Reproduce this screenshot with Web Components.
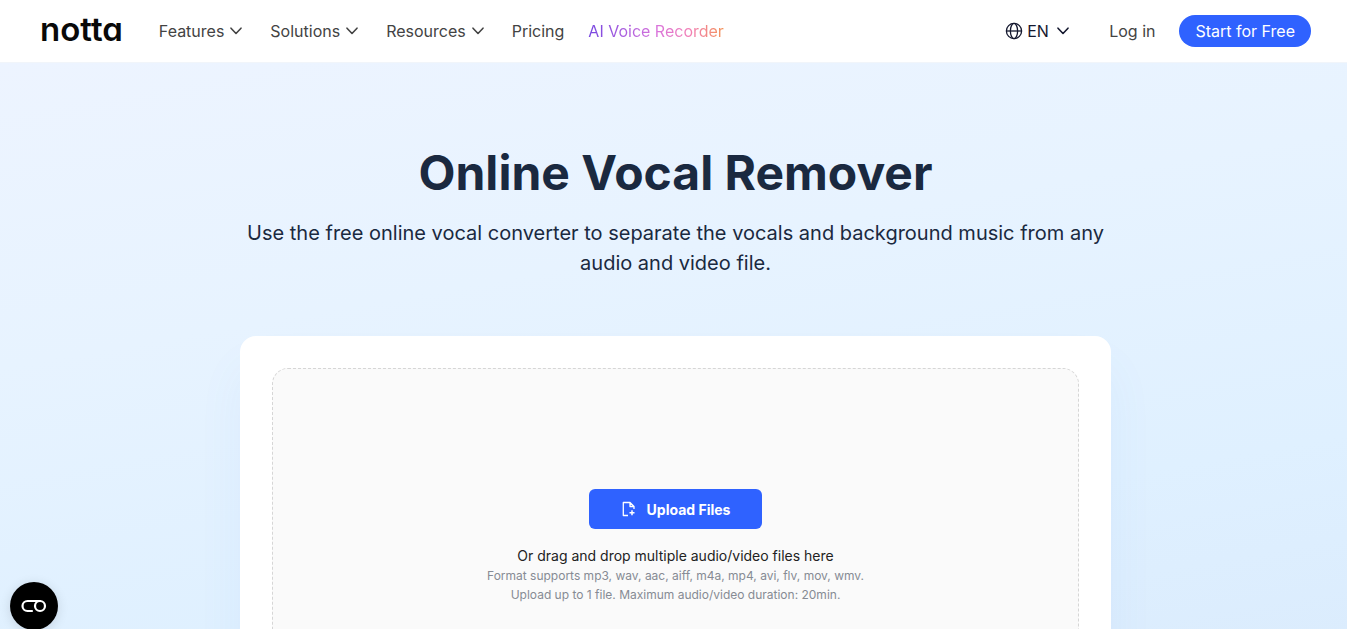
<!DOCTYPE html>
<html lang="en">
<head>
<meta charset="utf-8">
<meta name="viewport" content="width=device-width, initial-scale=1">
<title>Online Vocal Remover | Notta</title>
<style>
body { margin: 0; font-family: Inter, "Liberation Sans", sans-serif; color: #1a2940; background: #dbecfd; }
</style>
</head>
<body>
<notta-page></notta-page>
<script>
const define = (name, html) => customElements.define(name, class extends HTMLElement {
  constructor() {
    super();
    const t = document.createElement('template');
    t.innerHTML = html;
    this.attachShadow({ mode: 'open' }).append(t.content.cloneNode(true));
  }
});

define('icon-chevron', `
<style>:host{display:block;width:20px;height:20px} svg{display:block}</style>
<svg width="20" height="20" viewBox="0 0 20 20" fill="none" stroke="currentColor" stroke-width="1.6" stroke-linecap="round" stroke-linejoin="round" aria-hidden="true"><path d="M5 7.2l5 5.3 5-5.3"/></svg>`);

define('nav-menu', `
<style>
:host{display:block}
button{display:flex;align-items:center;gap:2px;padding:0;border:0;background:none;font:inherit;color:inherit;cursor:pointer}
</style>
<button type="button" aria-haspopup="true" aria-expanded="false"><span><slot></slot></span><icon-chevron></icon-chevron></button>`);

define('nav-link', `
<style>
:host{display:block}
a{color:inherit;text-decoration:none}
:host([highlight]) a{background:linear-gradient(90deg,#7646e0 0%,#d873dc 50%,#f27fb5 75%,#f39357 100%);-webkit-background-clip:text;background-clip:text;color:transparent}
</style>
<a href="#"><slot></slot></a>`);

define('language-picker', `
<style>
:host{display:flex;align-items:center;color:#14182f}
label{display:flex;align-items:center;gap:4px}
select{appearance:none;border:0;margin:0;padding:0;background:none;font:inherit;color:inherit;cursor:pointer}
icon-chevron{margin-left:4px;pointer-events:none}
svg{display:block}
</style>
<label>
<svg width="18" height="18" viewBox="0 0 18 18" fill="none" stroke="currentColor" stroke-width="1.3" aria-hidden="true"><circle cx="9" cy="9" r="7.6"/><ellipse cx="9" cy="9" rx="3.6" ry="7.6"/><path d="M1.4 9h15.2"/></svg>
<select aria-label="Language"><option>EN</option></select>
</label>
<icon-chevron></icon-chevron>`);

define('pill-link', `
<style>
:host{display:block}
a{display:block;padding:0 16px;border-radius:16px;background:#2f62ff;color:#fff;line-height:32px;text-decoration:none}
</style>
<a href="#"><slot></slot></a>`);

define('site-header', `
<style>
:host{display:block;background:#fff;color:#434343;font-size:16px;line-height:24px}
header{display:flex;align-items:center;justify-content:space-between;height:62px;padding:0 36px 0 40px;border-bottom:1px solid #f1f5fa;white-space:nowrap}
.start,nav,.end{display:flex;align-items:center}
.start{gap:36px}
nav,.end{gap:24px}
language-picker{margin-right:12px}
.logo{padding-bottom:4px;color:#090909;font-size:33px;font-weight:600;line-height:32px;font-feature-settings:"cv11";text-decoration:none}
</style>
<header>
<div class="start">
<a class="logo" href="#">notta</a>
<nav aria-label="Main">
<nav-menu>Features</nav-menu><nav-menu>Solutions</nav-menu><nav-menu>Resources</nav-menu>
<nav-link>Pricing</nav-link><nav-link highlight>AI Voice Recorder</nav-link>
</nav>
</div>
<div class="end">
<language-picker></language-picker>
<nav-link>Log in</nav-link>
<pill-link>Start for Free</pill-link>
</div>
</header>`);

define('hero-section', `
<style>
:host{display:block;padding:80px 0 96px 4px;background:linear-gradient(170deg,#edf4ff 0,#e7f3ff 300px,#dff0ff 600px,#dbecfd 800px)}
section{display:flex;flex-direction:column;align-items:center;max-width:871px;margin:0 auto;text-align:center}
h1{margin:0;font-size:48px;line-height:60px;font-weight:700}
p{margin:15px 0 58px;font-size:20px;line-height:30px}
.tool{align-self:stretch}
</style>
<section>
<h1><slot name="title"></slot></h1>
<p><slot name="lead"></slot></p>
<div class="tool"><slot></slot></div>
</section>`);

define('upload-button', `
<style>
:host{display:block}
button{display:flex;align-items:center;gap:10px;height:40px;padding:0 32px;border:0;border-radius:6px;background:#2f62ff;color:#fff;font:inherit;font-size:14px;font-weight:700;cursor:pointer}
svg{display:block}
</style>
<button type="button">
<svg width="16" height="16" viewBox="0 0 16 16" fill="none" stroke="currentColor" stroke-width="1.3" stroke-linejoin="round" aria-hidden="true"><path d="M7 14.5H2.3v-13H9L13 5.5V8M9 1.5v4h4"/><path d="M11 9.2v5M8.5 11.7h5" stroke-width="1.5"/></svg>
<span><slot></slot></span>
</button>`);

define('upload-card', `
<style>
:host{display:block;padding:32px;border-radius:16px;background:#fff;box-shadow:0 32px 48px rgba(80,130,220,.06)}
.drop{display:flex;flex-direction:column;align-items:center;padding:120px 24px;border:1px dashed #d6d6d6;border-radius:16px;background:#fafafa}
.hint{margin:17px 0 0;color:#222;font-size:14px;line-height:20px}
.note{margin:0;color:#868b94;font-size:12px;line-height:19px}
</style>
<div class="drop">
<upload-button>Upload Files</upload-button>
<div class="hint"><slot name="hint"></slot></div>
<div class="note"><slot name="formats"></slot></div>
<div class="note"><slot name="limits"></slot></div>
</div>`);

define('consent-button', `
<style>
:host{position:fixed;left:10px;bottom:-1px}
button{display:grid;place-items:center;width:48px;height:48px;padding:0;border:0;border-radius:50%;background:#000;color:#fff;box-shadow:0 2px 12px rgba(0,0,0,.12);cursor:pointer}
</style>
<button type="button" aria-label="Cookie preferences">
<svg width="26" height="14" viewBox="0 0 26 14" fill="none" stroke="currentColor" stroke-width="2.2" stroke-linecap="round" aria-hidden="true"><path d="M11 12H6.5a5 5 0 0 1 0-10H19"/><circle cx="19" cy="7" r="5"/></svg>
</button>`);

define('notta-page', `
<style>:host{display:block} main{display:block}</style>
<site-header></site-header>
<main>
<hero-section>
<span slot="title">Online Vocal Remover</span>
<span slot="lead">Use the free online vocal converter to separate the vocals and background music from any audio and video file.</span>
<upload-card>
<span slot="hint">Or drag and drop multiple audio/video files here</span>
<span slot="formats">Format supports mp3, wav, aac, aiff, m4a, mp4, avi, flv, mov, wmv.</span>
<span slot="limits">Upload up to 1 file. Maximum audio/video duration: 20min.</span>
</upload-card>
</hero-section>
</main>
<consent-button></consent-button>`);
</script>
</body>
</html>
